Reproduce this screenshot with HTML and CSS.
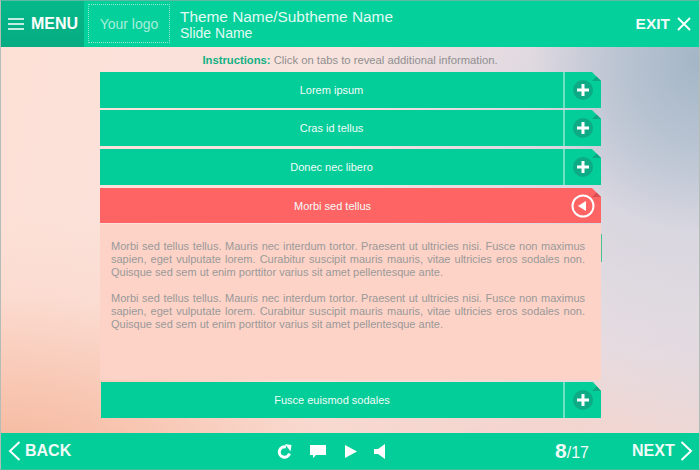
FILE: index.html
```html
<!DOCTYPE html>
<html lang="en">
<head>
<meta charset="utf-8">
<title>Slide</title>
<link rel="stylesheet" href="styles.css">
</head>
<body>
<div class="app">
  <header class="topbar">
    <div class="menu">
      <svg class="menu-icon" width="16" height="12" viewBox="0 0 16 12"><path d="M0 1h16M0 6h16M0 11h16" stroke="#fff" stroke-width="1.4"/></svg>
      <span>MENU</span>
    </div>
    <div class="logo">Your logo</div>
    <div class="titles">
      <div class="theme">Theme Name/Subtheme Name</div>
      <div class="slide">Slide Name</div>
    </div>
    <div class="exit">
      <span>EXIT</span>
      <svg width="14" height="14" viewBox="0 0 14 14"><path d="M1 1l12 12M13 1L1 13" stroke="#fff" stroke-width="1.8" fill="none"/></svg>
    </div>
  </header>
  <main class="stage">
    <p class="instructions"><b>Instructions:</b> Click on tabs to reveal additional information.</p>
    <div class="tabs">
      <div class="tab gap2"><div class="tab-label">Lorem ipsum</div><div class="tab-btn"><span class="plus"><svg width="12" height="12" viewBox="0 0 12 12"><path d="M6 0v12M0 6h12" stroke="#fff" stroke-width="3"/></svg></span></div></div>
      <div class="tab gap3"><div class="tab-label">Cras id tellus</div><div class="tab-btn"><span class="plus"><svg width="12" height="12" viewBox="0 0 12 12"><path d="M6 0v12M0 6h12" stroke="#fff" stroke-width="3"/></svg></span></div></div>
      <div class="tab gap3"><div class="tab-label">Donec nec libero</div><div class="tab-btn"><span class="plus"><svg width="12" height="12" viewBox="0 0 12 12"><path d="M6 0v12M0 6h12" stroke="#fff" stroke-width="3"/></svg></span></div></div>
      <div class="tab tab-open"><div class="tab-label">Morbi sed tellus</div><div class="tab-btn">
        <svg width="24" height="24" viewBox="0 0 24 24"><circle cx="12" cy="12" r="10.500" fill="none" stroke="#fff" stroke-width="2"/><path d="M7 12l8-5v10z" fill="#fff"/></svg>
      </div></div>
      <div class="panel">
        <i class="panel-mark"></i>
        <p>Morbi sed tellus tellus. Mauris nec interdum tortor. Praesent ut ultricies nisi. Fusce non maximus sapien, eget vulputate lorem. Curabitur suscipit mauris mauris, vitae ultricies eros sodales non. Quisque sed sem ut enim porttitor varius sit amet pellentesque ante.</p>
        <p>Morbi sed tellus tellus. Mauris nec interdum tortor. Praesent ut ultricies nisi. Fusce non maximus sapien, eget vulputate lorem. Curabitur suscipit mauris mauris, vitae ultricies eros sodales non. Quisque sed sem ut enim porttitor varius sit amet pellentesque ante.</p>
      </div>
      <div class="tab tab-last"><div class="tab-label">Fusce euismod sodales</div><div class="tab-btn"><span class="plus"><svg width="12" height="12" viewBox="0 0 12 12"><path d="M6 0v12M0 6h12" stroke="#fff" stroke-width="3"/></svg></span></div></div>
    </div>
  </main>
  <footer class="bottombar">
    <div class="back">
      <svg width="13" height="20" viewBox="0 0 13 20"><path d="M11.500 1L2 10l9.500 9" stroke="#fff" stroke-width="2" fill="none"/></svg>
      <span>BACK</span>
    </div>
    <div class="controls">
      <svg class="ctl-refresh" width="15" height="15" viewBox="0 0 15 15"><path d="M12.500 9.500A5.200 5.200 0 1 1 9 3" stroke="#fff" stroke-width="3" fill="none"/><path d="M8 0l6.500 1-1 6.500z" fill="#fff"/></svg>
      <svg class="ctl-comment" width="16" height="15" viewBox="0 0 16 15"><path d="M0 1h16v10H6l-3 3v-3H0z" fill="#fff"/></svg>
      <svg class="ctl-play" width="13" height="13" viewBox="0 0 13 13"><path d="M1 0l12 6.500L1 13z" fill="#fff"/></svg>
      <svg class="ctl-sound" width="12" height="15" viewBox="0 0 12 15"><path d="M0 5h4l7-5v15l-7-5H0z" fill="#fff"/></svg>
    </div>
    <div class="pager"><b>8</b>/17</div>
    <div class="next">
      <span>NEXT</span>
      <svg width="13" height="20" viewBox="0 0 13 20"><path d="M1.500 1L11 10l-9.500 9" stroke="#fff" stroke-width="2" fill="none"/></svg>
    </div>
  </footer>
</div>
</body>
</html>
```

FILE: styles.css
```css
* { box-sizing: border-box; }
html, body { margin: 0; padding: 0; }
body { font-family: "Liberation Sans", Arial, sans-serif; }
.app {
  width: 700px; height: 470px; display: flex; flex-direction: column;
  border: 1px solid #b4bcb8; border-bottom: 1px solid #3bbf9c; border-top-color: #5fb8a2;
  background:
    radial-gradient(ellipse 170px 170px at 700px 60px, #a3b6c6 0%, rgba(172,187,203,.7) 45%, rgba(200,205,220,0) 100%),
    radial-gradient(ellipse 340px 310px at 680px 130px, rgba(205,210,222,.95) 0%, rgba(218,216,226,.55) 60%, rgba(230,220,225,0) 100%),
    radial-gradient(ellipse 480px 280px at 0 490px, #f3b093 0%, rgba(247,190,166,.8) 35%, rgba(250,210,195,.35) 70%, rgba(250,220,208,0) 100%),
    radial-gradient(ellipse 350px 140px at 520px 470px, rgba(248,208,196,.9) 0%, rgba(248,215,205,0) 100%),
    linear-gradient(100deg, #fde0d6 0%, #f8e3de 45%, #eeddE0 75%, #e8dcdf 100%);
}
.topbar { height: 46px; flex: none; display: flex; align-items: stretch; background: #03d09a; color: #fff; }
.menu { width: 83px; background: linear-gradient(#05b98a, #07ab82); display: flex; align-items: center; gap: 7px; padding-left: 7px; font-weight: 700; font-size: 16px; }
.menu-icon { flex: none; }
.logo { width: 82px; height: 39px; margin: 3px 0 0 4px; border: 1px dotted #8fe8cf; color: #a9eedb; font-size: 14px; display: flex; align-items: center; justify-content: center; }
.titles { margin-left: 10px; padding-top: 7px; flex: 1; color: #e2faf3; }
.theme { font-size: 15.4px; line-height: 17px; }
.slide { font-size: 14px; line-height: 16px; }
.exit { display: flex; align-items: center; gap: 7px; padding-right: 8px; font-weight: 700; font-size: 15.5px; color: #f0fbf8; }
.stage { flex: 1; min-height: 0; display: flex; flex-direction: column; }
.instructions { margin: 7px 0 0; height: 18px; text-align: center; font-size: 11.25px; line-height: 13px; color: #8f8f8f; }
.instructions b { color: #14b084; }
.tabs { width: 501px; margin-left: 99px; }
.tab { height: 36px; display: flex; background: #03cd98; color: #f2fcf9; font-size: 11px; clip-path: polygon(0 0, 492px 0, 100% 9px, 100% 100%, 0 100%); position: relative; }
.tab::after { content: ""; position: absolute; right: 0; top: 0; border-style: solid; border-width: 0 0 9px 9px; border-color: transparent transparent #0aa883 transparent; }
.gap2 { margin-bottom: 2px; }
.gap3 { margin-bottom: 3px; }
.tab-label { flex: 1; display: flex; align-items: center; justify-content: center; border-right: 2px solid #6fe2c3; }
.tab-btn { width: 36px; flex: none; display: flex; align-items: center; justify-content: center; }
.plus { width: 20px; height: 20px; border-radius: 50%; background: #0cab85; display: flex; align-items: center; justify-content: center; }
.tab-open { background: #ff6464; height: 35px; }
.tab-open::after { border-color: transparent transparent #d94f55 transparent; }
.tab-open .tab-label { border-right: 0; }
.panel { height: 156px; margin-top: 1px; padding: 16px 16px 0 11px; background: #fed3c7; color: #999; font-size: 11px; line-height: 13px; text-align: justify; position: relative; }
.panel p { margin: 0 0 13px; }
.panel-mark { position: absolute; right: -1px; top: 10px; width: 1px; height: 28px; background: #45c49b; }
.tab-last { margin: 2px 0 0 1px; }
.bottombar { height: 36px; margin-top: auto; flex: none; background: #03cd98; color: #f0fbf8; display: flex; align-items: center; font-weight: 700; font-size: 16px; }
.back { display: flex; align-items: center; gap: 4px; padding-left: 7px; width: 276px; }
.controls { display: flex; align-items: center; width: 278px; }
.ctl-comment { margin-left: 18px; }
.ctl-play { margin-left: 18px; }
.ctl-sound { margin-left: 17px; }
.pager { width: 77px; font-size: 16px; font-weight: 400; }
.pager b { font-size: 21px; font-weight: 700; }
.next { display: flex; align-items: center; gap: 5px; }
```
